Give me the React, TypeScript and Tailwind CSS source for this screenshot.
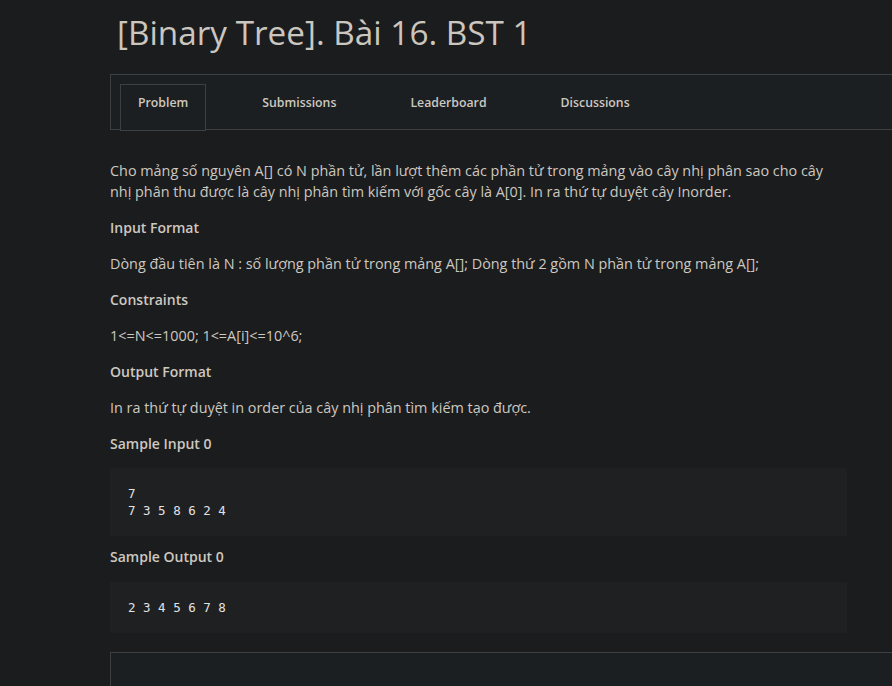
import React from 'react';

const tabs = ['Problem', 'Submissions', 'Leaderboard', 'Discussions'];

const Heading: React.FC<{ children: React.ReactNode }> = ({ children }) => (
  <h3 className="text-[14px] leading-[21px] font-semibold text-[#cdc8c0]">{children}</h3>
);

const Para: React.FC<{ children: React.ReactNode }> = ({ children }) => (
  <p className="text-[14.4px] leading-[21px] text-[#cdc8c0]">{children}</p>
);

const CodeBlock: React.FC<{ lines: string[] }> = ({ lines }) => (
  <div className="w-[737px] bg-[#1f2022] pl-[18px] pt-[17px] pb-[17px]">
    {lines.map((l, i) => (
      <div
        key={i}
        className="text-[12.5px] leading-[17px] text-[#e2e2e2]"
        style={{ fontFamily: '"DejaVu Sans Mono", "Liberation Mono", monospace' }}
      >
        {l}
      </div>
    ))}
  </div>
);

export default function App() {
  return (
    <div
      className="min-h-screen h-[686px] overflow-hidden bg-[#1b1c1e] pl-[110px]"
      style={{ fontFamily: '"Open Sans", "Noto Sans", sans-serif' }}
    >
      <h1 className="ml-[7px] pt-[10px] text-[33.3px] leading-[44px] font-medium text-[#cbc6be]">
        [Binary Tree]. Bài 16. BST 1
      </h1>

      {/* Tabs */}
      <div className="mt-[20px] w-[800px] h-[56px] border border-[#3c4043] bg-[#1c1f21] flex items-start pl-[9px] gap-[38px]">
        {tabs.map((t, i) => (
          <div
            key={t}
            className={`relative z-10 mt-[9px] h-[47px] px-[17px] pt-[8px] text-[12.3px] leading-[20px] font-semibold text-[#cdc8c0] ${
              i === 0 ? 'border border-[#3c4043] bg-[#1c1f21]' : 'border border-transparent'
            }`}
          >
            {t}
          </div>
        ))}
      </div>

      {/* Body */}
      <div className="mt-[30px] w-[737px] flex flex-col gap-[15px]">
        <Para>
          Cho mảng số nguyên A[] có N phần tử, lần lượt thêm các phần tử trong mảng vào cây nhị phân sao cho cây
          nhị phân thu được là cây nhị phân tìm kiếm với gốc cây là A[0]. In ra thứ tự duyệt cây Inorder.
        </Para>
        <Heading>Input Format</Heading>
        <Para>Dòng đầu tiên là N : số lượng phần tử trong mảng A[]; Dòng thứ 2 gồm N phần tử trong mảng A[];</Para>
        <Heading>Constraints</Heading>
        <Para>1&lt;=N&lt;=1000; 1&lt;=A[i]&lt;=10^6;</Para>
        <Heading>Output Format</Heading>
        <Para>In ra thứ tự duyệt in order của cây nhị phân tìm kiếm tạo được.</Para>
        <Heading>Sample Input 0</Heading>
      </div>
      <div className="mt-[14px]">
        <CodeBlock lines={['7', '7 3 5 8 6 2 4']} />
      </div>
      <div className="mt-[10px]">
        <Heading>Sample Output 0</Heading>
      </div>
      <div className="mt-[15px]">
        <CodeBlock lines={['2 3 4 5 6 7 8']} />
      </div>

      <div className="mt-[19px] w-[800px] h-[120px] border border-[#3c4043] bg-[#1c1f21]" />
    </div>
  );
}
